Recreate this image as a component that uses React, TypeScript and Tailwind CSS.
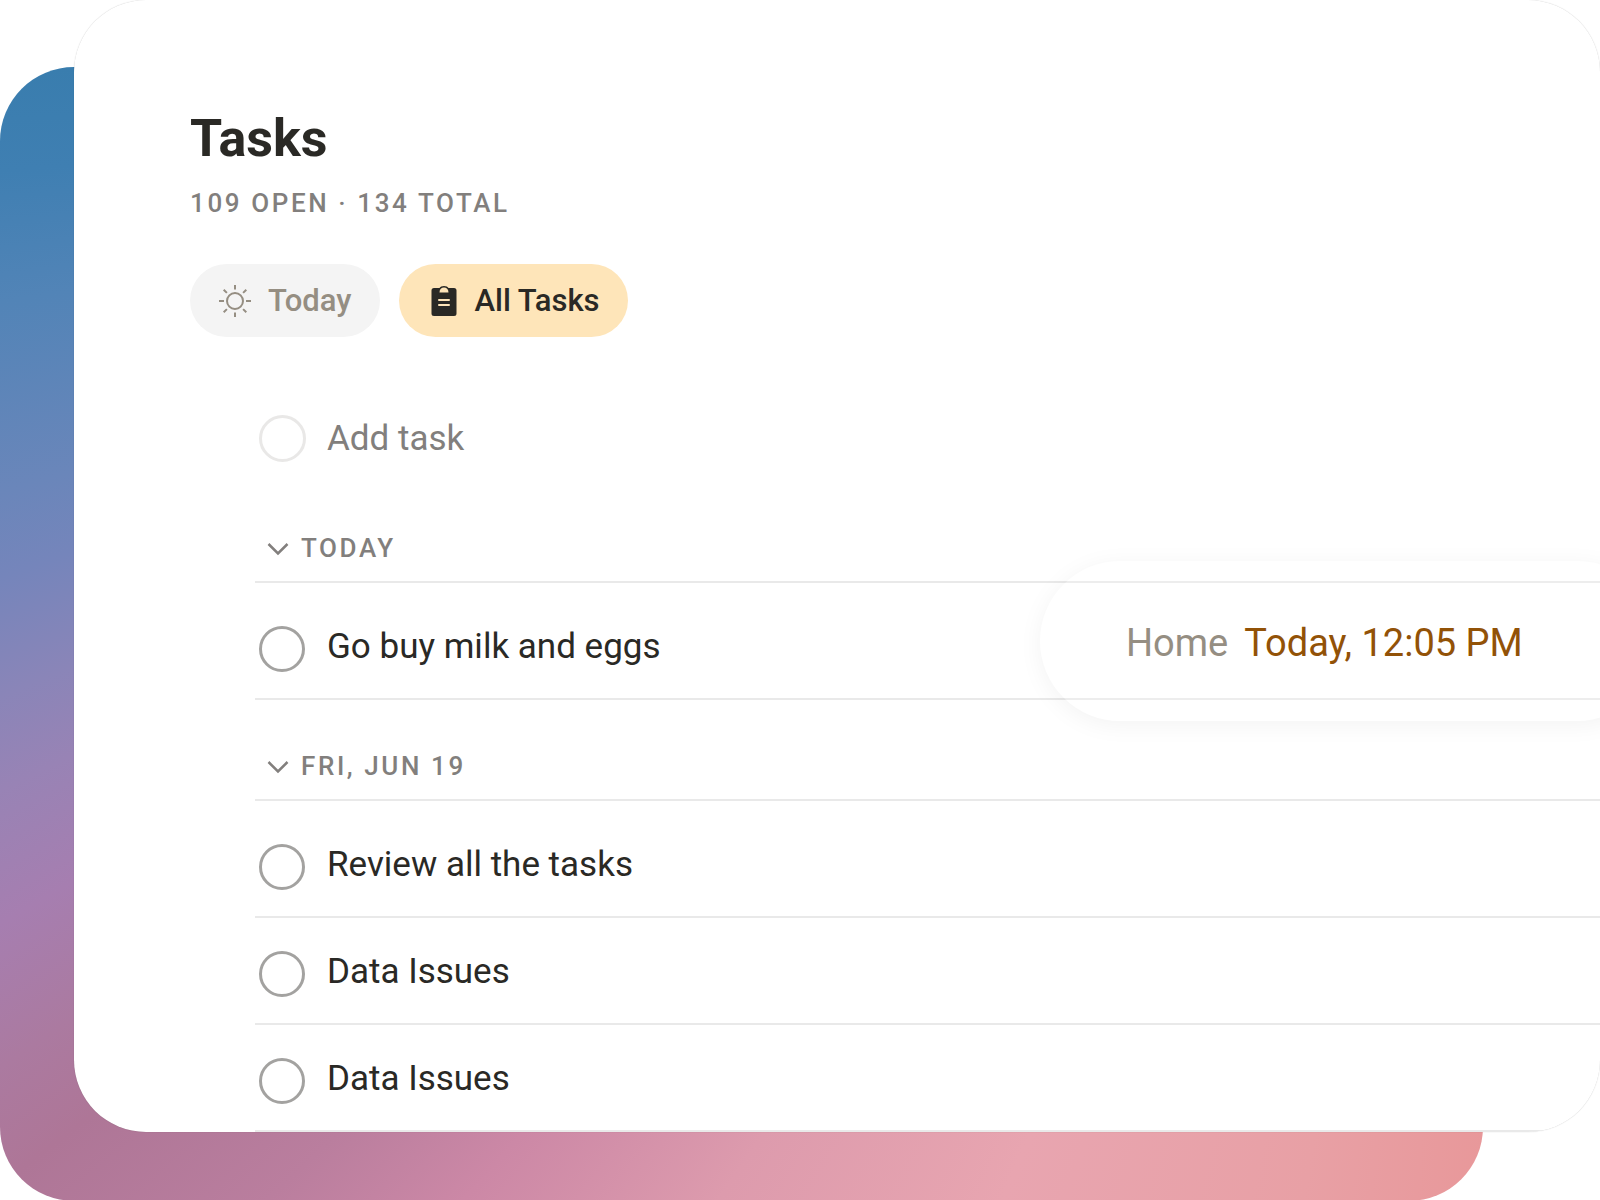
import { useState } from "react";

const groups = [
  {
    title: "TODAY",
    tasks: [{ id: "milk", label: "Go buy milk and eggs", list: "Home", due: "Today, 12:05 PM" }],
  },
  {
    title: "FRI, JUN 19",
    tasks: [
      { id: "review", label: "Review all the tasks" },
      { id: "data-1", label: "Data Issues" },
      { id: "data-2", label: "Data Issues" },
    ],
  },
];

type Task = { id: string; label: string; list?: string; due?: string };

function SunIcon() {
  return (
    <svg viewBox="0 0 34 34" className="size-[34px]" fill="none" stroke="currentColor" strokeWidth="2" aria-hidden="true">
      <circle cx="17" cy="17" r="8" />
      <path d="M17 1v4.5M17 28.500v4.500M1 17h5M28 17h5M5.700 5.700l3.200 3.200M25.100 25.100l3.200 3.200M28.300 5.700l-3.200 3.200M8.900 25.100l-3.200 3.200" />
    </svg>
  );
}

function ClipboardIcon() {
  return (
    <svg viewBox="0 0 26 30" className="h-[30px] w-[26px]" aria-hidden="true">
      <path
        fill="currentColor"
        fillRule="evenodd"
        d="M3 2h5.500C9.200.7 10.900 0 13 0s3.800.7 4.500 2H23a2.500 2.500 0 0 1 2.500 2.500v23A2.500 2.500 0 0 1 23 30H3a2.500 2.500 0 0 1-2.500-2.500v-23A2.500 2.500 0 0 1 3 2zM8.500 6.500h9c0-3.200-2-5-4.500-5s-4.500 1.800-4.500 5zM8 13a1 1 0 0 0 0 2h10a1 1 0 0 0 0-2zM8 18a1 1 0 0 0 0 2h10a1 1 0 0 0 0-2z"
      />
    </svg>
  );
}

function TaskRow({ task, first }: { task: Task; first: boolean }) {
  return (
    <li className={`relative flex items-center border-b-2 border-[#e9e9e9] pl-1 ${first ? "h-[117px] pt-4" : "h-[107px] pt-1.5"}`}>
      <input
        id={task.id}
        type="checkbox"
        className="size-[46px] shrink-0 appearance-none rounded-full border-[3px] border-[#a3a2a0] checked:bg-[#a3a2a0]"
      />
      <label htmlFor={task.id} className="flex-1 pb-1 pl-[22px] text-[35px] leading-[44px] text-[#2a2925]">
        {task.label}
      </label>
      {task.list && (
        <div className="absolute -right-[57px] top-1/2 flex h-[160px] w-[617px] -translate-y-1/2 items-center gap-4 rounded-full bg-white/20 pl-[86px] pt-1 text-[38px] leading-[48px] shadow-[0_4px_24px_rgba(0,0,0,0.05)]">
          <span className="text-[#958e82]">{task.list}</span>
          <time className="text-[#925207]">{task.due}</time>
        </div>
      )}
    </li>
  );
}

function TaskGroup({ title, tasks }: { title: string; tasks: Task[] }) {
  const [open, setOpen] = useState(true);
  return (
    <section>
      <h2 className="border-b-2 border-[#e9e9e9]">
        <button
          type="button"
          aria-expanded={open}
          onClick={() => setOpen(!open)}
          className="flex h-[99px] items-center gap-3 pl-3 pt-8 text-[26px] font-medium leading-8 tracking-widest text-[#827f7d]"
        >
          <svg viewBox="0 0 22 14" className="mt-0.5 h-[14px] w-[22px]" fill="none" stroke="currentColor" strokeWidth="2.500" aria-hidden="true">
            <path d="M1.500 2l9.500 9.500L20.500 2" />
          </svg>
          {title}
        </button>
      </h2>
      {open && (
        <ul>
          {tasks.map((task, i) => (
            <TaskRow key={task.id} task={task} first={i === 0} />
          ))}
        </ul>
      )}
    </section>
  );
}

export default function App() {
  const [tab, setTab] = useState("all");
  return (
    <div className="grid grid-cols-1 overflow-hidden bg-white font-['Roboto',sans-serif]">
      <div className="col-start-1 row-start-1 mr-[117px] mt-[67px] rounded-[74px] bg-[conic-gradient(from_180deg_at_100%_0%,#e8989a_0deg,#e8a0a5_9deg,#e8a5b0_23deg,#dd9bad_34deg,#cc88a6_42deg,#ba7e9e_47deg,#ae7697_53deg,#ab7aa0_56deg,#a67eb0_60deg,#9883b5_64deg,#8a85b8_67deg,#7585bb_71deg,#6a86ba_74deg,#5284b7_81deg,#3f7fb2_86deg,#397dae_90deg)]" />
      <main className="z-10 col-start-1 row-start-1 mb-[69px] ml-[74px] overflow-hidden rounded-[72px] bg-white pl-[116px] pt-[107px] shadow-[0_0_1px_rgba(0,0,0,0.25)]">
        <h1 className="text-[52px] font-bold leading-[64px] text-[#2a2925]">Tasks</h1>
        <p className="mt-4 text-[26px] font-medium leading-8 tracking-widest text-[#827f7d]">109 OPEN · 134 TOTAL</p>
        <nav className="mt-[45px] flex gap-[19px] text-[31px] font-medium leading-9">
          <button
            type="button"
            aria-pressed={tab === "today"}
            onClick={() => setTab("today")}
            className="flex h-[73px] items-center gap-4 rounded-full bg-[#f4f4f4] px-7 text-[#958e82]"
          >
            <SunIcon />
            Today
          </button>
          <button
            type="button"
            aria-pressed={tab === "all"}
            onClick={() => setTab("all")}
            className="flex h-[73px] items-center gap-[18px] rounded-full bg-[#fee5b9] pl-8 pr-7 text-[#2a2925]"
          >
            <ClipboardIcon />
            All Tasks
          </button>
        </nav>
        <div className="ml-[65px]">
          <label className="mt-[77px] flex items-center gap-[21px] pl-1">
            <span className="size-[47px] shrink-0 rounded-full border-[3px] border-[#e9e8e7]" />
            <input
              type="text"
              placeholder="Add task"
              aria-label="Add task"
              className="h-[48px] min-w-0 flex-1 pt-0.5 text-[35px] text-[#2a2925] outline-none placeholder:text-[#827f7d]"
            />
          </label>
          <div className="mt-5">
            {groups.map((group) => (
              <TaskGroup key={group.title} title={group.title} tasks={group.tasks} />
            ))}
          </div>
        </div>
      </main>
    </div>
  );
}
